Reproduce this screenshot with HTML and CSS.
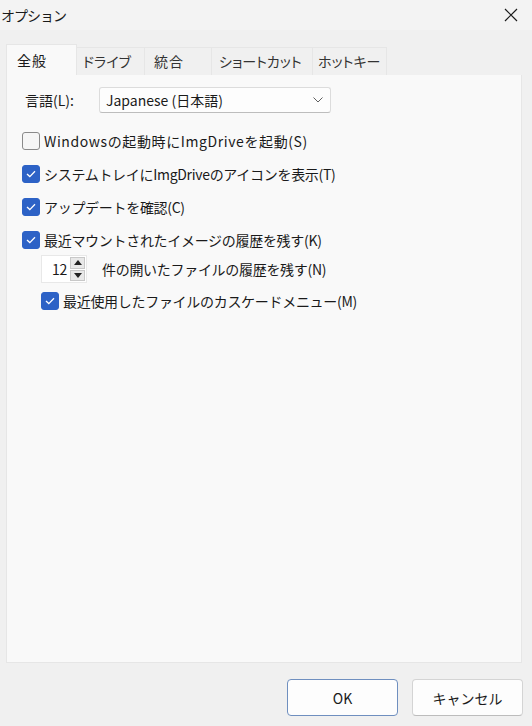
FILE: index.html
```html
<!DOCTYPE html>
<html lang="ja">
<head>
    <meta charset="UTF-8">
    <meta name="viewport" content="width=device-width, initial-scale=1.0">
    <title>オプション</title>
    <link rel="stylesheet" href="styles.css">
</head>
<body>
    <div class="window">
        <div class="titlebar">
            <span class="title">オプション</span>
            <span class="close">
                <svg width="14" height="14" viewBox="0 0 14 14">
                    <path d="M1 1 L13 13 M13 1 L1 13" stroke="#1a1a1a" stroke-width="1.2" fill="none"/>
                </svg>
            </span>
        </div>
        <div class="tabs">
            <div class="tab active">全般</div>
            <div class="tab t-drive">ドライブ</div>
            <div class="tab t-merge">統合</div>
            <div class="tab t-short">ショートカット</div>
            <div class="tab t-hot">ホットキー</div>
        </div>
        <div class="panel">
            <div class="lang-row">
                <span class="lang-label">言語(L):</span>
                <div class="select">
                    <span>Japanese (日本語)</span>
                    <svg class="chevron" width="10" height="6" viewBox="0 0 10 6">
                        <path d="M0.5 0.5 L5 5 L9.5 0.5" stroke="#606060" stroke-width="1" fill="none"/>
                    </svg>
                </div>
            </div>
            <div class="options">
                <label class="check">
                    <span class="box"></span>
                    <span class="wide">Windowsの起動時にImgDriveを起動(S)</span>
                </label>
                <label class="check">
                    <span class="box on"><svg width="10" height="8" viewBox="0 0 10 8"><path d="M1 4 L3.8 6.6 L9 1.2" stroke="#fff" stroke-width="1.3" fill="none"/></svg></span>
                    <span>システムトレイにImgDriveのアイコンを表示(T)</span>
                </label>
                <label class="check">
                    <span class="box on"><svg width="10" height="8" viewBox="0 0 10 8"><path d="M1 4 L3.8 6.6 L9 1.2" stroke="#fff" stroke-width="1.3" fill="none"/></svg></span>
                    <span>アップデートを確認(C)</span>
                </label>
                <label class="check">
                    <span class="box on"><svg width="10" height="8" viewBox="0 0 10 8"><path d="M1 4 L3.8 6.6 L9 1.2" stroke="#fff" stroke-width="1.3" fill="none"/></svg></span>
                    <span>最近マウントされたイメージの履歴を残す(K)</span>
                </label>
                <div class="spin-row">
                    <div class="spinner">
                        <span class="spin-value">12</span>
                        <div class="spin-buttons">
                            <span class="spin-btn"><svg width="8" height="5" viewBox="0 0 8 5"><path d="M0 5 L4 0 L8 5 Z" fill="#222"/></svg></span>
                            <span class="spin-btn"><svg width="8" height="5" viewBox="0 0 8 5"><path d="M0 0 L4 5 L8 0 Z" fill="#222"/></svg></span>
                        </div>
                    </div>
                    <span>件の開いたファイルの履歴を残す(N)</span>
                </div>
                <label class="check sub">
                    <span class="box on"><svg width="10" height="8" viewBox="0 0 10 8"><path d="M1 4 L3.8 6.6 L9 1.2" stroke="#fff" stroke-width="1.3" fill="none"/></svg></span>
                    <span>最近使用したファイルのカスケードメニュー(M)</span>
                </label>
            </div>
        </div>
        <div class="footer">
            <button class="btn default">OK</button>
            <button class="btn">キャンセル</button>
        </div>
    </div>
</body>
</html>
```

FILE: styles.css
```css
body {
    margin: 0;
    padding: 0;
    background-color: #f0f0f0;
    color: #1a1a1a;
    font-family: "Noto Sans CJK JP", "Noto Sans", sans-serif;
    font-size: 14px;
}
.window {
    width: 532px;
    height: 726px;
    display: flex;
    flex-direction: column;
    overflow: hidden;
}
.titlebar {
    height: 30px;
    display: flex;
    align-items: center;
    justify-content: space-between;
    padding: 0 14px 0 1px;
    background-color: #f3f3f3;
}
.title {
    font-size: 14px;
    letter-spacing: -1px;
}
.close {
    display: flex;
}
.tabs {
    display: flex;
    align-items: flex-end;
    height: 31px;
    margin: 14px 0 0 6px;
}
.tab {
    height: 28px;
    line-height: 26px;
    box-sizing: border-box;
    padding-left: 6px;
    border: 1px solid #e6e6e6;
    border-bottom: none;
    border-left: none;
    background-color: #f0f0f0;
    color: #333;
    white-space: nowrap;
    font-feature-settings: "palt";
}
.tab.active {
    width: 71px;
    height: 31px;
    line-height: 30px;
    padding-left: 10px;
    background-color: #f9f9f9;
    border-left: 1px solid #e6e6e6;
    color: #1a1a1a;
    letter-spacing: 1px;
}
.t-drive { width: 68px; }
.t-merge { width: 67px; padding-left: 9px; letter-spacing: 1px; }
.t-short { width: 101px; padding-left: 7px; }
.t-hot { width: 74px; padding-left: 5px; }
.panel {
    height: 588px;
    margin: 0 10px 0 6px;
    box-sizing: border-box;
    background-color: #f9f9f9;
    border: 1px solid #e6e6e6;
    border-top: none;
    padding: 12px 0 0 15px;
}
.lang-row {
    display: flex;
    align-items: center;
    gap: 13px;
}
.lang-label {
    padding-left: 3px;
    width: 61px;
}
.select {
    width: 232px;
    height: 26px;
    box-sizing: border-box;
    display: flex;
    align-items: center;
    justify-content: space-between;
    padding: 0 7px 0 6px;
    background-color: #fdfdfd;
    border: 1px solid #dcdcdc;
    border-bottom-color: #bdbdbd;
    border-radius: 3px;
    font-size: 14px;
}
.options {
    margin-top: 11px;
    display: flex;
    flex-direction: column;
}
.check {
    display: flex;
    align-items: center;
    gap: 4px;
    height: 33px;
    letter-spacing: -0.3px;
}
.wide {
    letter-spacing: 0.6px;
}
.box {
    width: 18px;
    height: 18px;
    box-sizing: border-box;
    border: 1px solid #8a8a8a;
    border-radius: 3px;
    background-color: #f6f6f6;
    display: flex;
    align-items: center;
    justify-content: center;
}
.box.on {
    background-color: #2d62c6;
    border-color: #2d62c6;
}
.spin-row {
    display: flex;
    align-items: center;
    gap: 15px;
    height: 26px;
    padding-left: 19px;
    letter-spacing: -0.3px;
}
.spinner {
    display: flex;
    height: 28px;
    width: 46px;
    flex-shrink: 0;
    box-sizing: border-box;
    background-color: #fff;
    border: 1px solid #e8e8e8;
}
.spin-value {
    width: 28px;
    line-height: 26px;
    text-align: right;
    padding-right: 3px;
    box-sizing: border-box;
}
.spin-buttons {
    display: flex;
    flex-direction: column;
    gap: 1px;
    padding: 1px 0;
}
.spin-btn {
    width: 15px;
    flex: 1;
    display: flex;
    align-items: center;
    justify-content: center;
    background-color: #e8e8e8;
    border: 1px solid #c8c8c8;
    box-sizing: border-box;
}
.check.sub {
    padding-left: 19px;
    margin-top: 2px;
}
.footer {
    display: flex;
    justify-content: flex-end;
    gap: 14px;
    padding: 16px 9px 0 0;
}
.btn {
    width: 111px;
    height: 37px;
    background-color: #fdfdfd;
    border: 1px solid #d4d4d4;
    border-bottom-color: #bcbcbc;
    border-radius: 4px;
    font-family: "Noto Sans CJK JP", "Noto Sans", sans-serif;
    font-size: 14px;
    color: #1a1a1a;
}
.btn.default {
    border: 1px solid #6f8fbf;
}
```
